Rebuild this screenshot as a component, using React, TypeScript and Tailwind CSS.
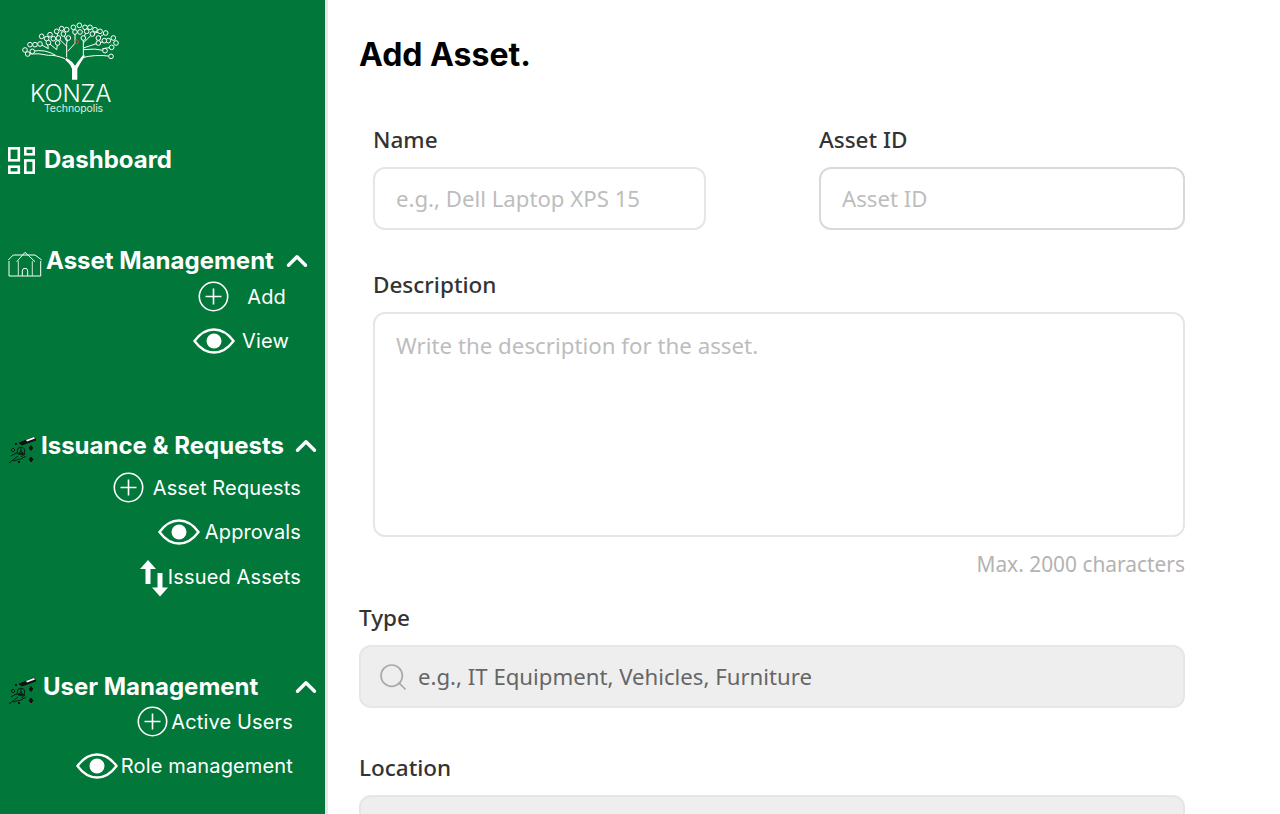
import type { ReactNode } from 'react';
import { Search, ChevronUp } from 'lucide-react';

const inter = "font-['Inter',sans-serif]";

const PlusCircle = () => (
  <svg width="31" height="31" viewBox="0 0 31 31" fill="none" stroke="#fff" className="shrink-0">
    <circle cx="15.5" cy="15.5" r="14.2" strokeWidth="1.6" />
    <path d="M15.5 7.5v16M7.5 15.5h16" strokeWidth="1.6" />
  </svg>
);

const Eye = () => (
  <svg width="42" height="26" viewBox="0 0 42 26" fill="none" className="shrink-0">
    <path d="M1.5 13C7 5.5 13.500 1.500 21 1.500S35 5.500 40.500 13C35 20.500 28.500 24.500 21 24.500S7 20.500 1.500 13Z" stroke="#fff" strokeWidth="2.4" />
    <circle cx="21" cy="13" r="7.500" fill="#fff" />
  </svg>
);

const Arrows = () => (
  <svg width="28" height="37" viewBox="0 0 28 37" fill="#fff" className="mt-[2px] shrink-0">
    <path d="M8 0l8 9h-5.500v15h-5V9H0Z" />
    <path d="M20 36.500l-8-9h5.500V13h5v14.500H28Z" />
  </svg>
);

const DashIcon = () => (
  <svg width="27" height="27" viewBox="0 0 27 27" fill="none" stroke="#fff" strokeWidth="2.6" className="shrink-0">
    <rect x="1.300" y="1.300" width="9.500" height="12" />
    <rect x="17.300" y="1.300" width="8.400" height="6" />
    <rect x="1.300" y="19.700" width="9.500" height="6" />
    <rect x="17.300" y="13.500" width="8.400" height="12.200" />
  </svg>
);

const HouseIcon = () => (
  <svg width="34" height="26" viewBox="0 0 34 26" fill="none" stroke="#fff" strokeWidth="1" className="mt-[5px] shrink-0">
    <path d="M0.300 9l5-5H27l6.700 5" />
    <path d="M1 10v15h31.700V10" />
    <path d="M8.700 10.700L17 1.300l10 9.400" />
    <path d="M10.300 25V10M24.300 25V10" stroke="#cfe6d8" />
    <path d="M14.300 25v-5a2.700 2.700 0 0 1 5.400 0v5" />
  </svg>
);

const HandIcon = () => (
  <svg width="28" height="28" viewBox="0 0 28 28" fill="none" stroke="#111" strokeWidth="0.9" className="mt-[5px] shrink-0">
    <path d="M11 7l15-6 2 3-14 5z" fill="#111" />
    <path d="M18 4l8-3 1 1.500-8 3z" fill="#fff" stroke="none" />
    <circle cx="13" cy="15" r="3.800" />
    <path d="M13 11.500v7M13 15l-2.500 2.500M13 15l2.500 2.500" />
    <path d="M23 9.500l1.800 2.500L23 14.500 21.200 12zM23 21l2 2.500L23 26l-2-2.500z" fill="#111" />
    <path d="M1 27l9-7M3 20l5-3 9 1-4 3M5 25l8-2 5-3" />
    <path d="M5 12l2 2-2 2-2-2zM8 7l1 1-1 1-1-1zM11 25l1 1-1 1-1-1z" />
  </svg>
);

const TreeLogo = () => {
  const dots = [
    [30, 96], [45, 80], [60, 80], [38, 108], [52, 100], [80, 55], [95, 62], [105, 50], [125, 40], [115, 62],
    [140, 32], [155, 35], [175, 28], [193, 22], [210, 28], [225, 28], [240, 35], [255, 40], [272, 45], [295, 60],
    [280, 68], [303, 75], [290, 88], [250, 60], [232, 48], [205, 60], [180, 42], [160, 60], [130, 60], [128, 75],
    [75, 78], [270, 98], [288, 115], [250, 75], [215, 40], [195, 42], [100, 74], [268, 68], [145, 48],
  ];
  return (
    <svg width="110" height="65" viewBox="0 0 330 195" fill="none" stroke="#fff" strokeWidth="3" className="shrink-0">
      <path d="M171 185V152Q165 136 150 125L155 120Q172 130 180 143Q190 128 205 110L210 114Q195 136 187 152V185Z" fill="#fff" stroke="none" />
      <path d="M150 122Q120 110 100 112Q75 105 38 108M122 112Q90 92 52 100M100 92L75 78M100 92L95 62M125 95L128 75M125 95L100 74" />
      <path d="M155 118V75L160 60M158 100L180 76M155 85L130 60M130 60L115 62M130 60L125 40M155 70L145 48" />
      <path d="M205 112V60M205 95Q240 90 270 98M198 120Q240 108 288 115M205 90L250 75M205 75L232 48M232 48L255 40M250 60L272 45M250 75L280 68M262 92L290 88M205 60L215 40M180 76V42" />
      {dots.map(([cx, cy]) => (
        <circle key={`${cx}-${cy}`} cx={cx} cy={cy} r="7" fill="#02773a" />
      ))}
      <circle cx="185" cy="71" r="5.500" stroke="#d8493c" strokeWidth="3" />
    </svg>
  );
};

const SubItem = ({ icon, label, className }: { icon: ReactNode; label: string; className: string }) => (
  <div className={`flex items-center justify-end text-[20px] leading-[24px] font-normal tracking-[0.15px] text-white ${className}`}>
    {icon}
    <span>{label}</span>
  </div>
);

const Field = ({ label, children, className = '' }: { label: string; children: ReactNode; className?: string }) => (
  <div className={className}>
    <div className="mb-[12px] h-[30px] text-[22.500px] leading-[30px] font-medium text-[#333]">{label}</div>
    {children}
  </div>
);

export default function App() {
  return (
    <div className="flex h-[814px] w-[1280px] overflow-hidden bg-white">
      <aside className={`w-[328px] shrink-0 border-r-[3px] border-[#e8e8e8] bg-[#02773a] text-white ${inter}`}>
        <div className="flex flex-col items-start pt-[18px] pl-[15px]">
          <TreeLogo />
          <div className="ml-[15px] text-[24px] leading-[22px] font-light tracking-[-0.2px]">KONZA</div>
          <div className="ml-[29px] text-[10.500px] leading-[8px] font-normal tracking-[-0.1px] text-[#dcebe2]">Technopolis</div>
        </div>

        <div className="mt-[32px] flex items-center gap-[9px] pl-[8px]">
          <DashIcon />
          <span className="text-[24px] leading-[30px] font-bold">Dashboard</span>
        </div>

        <div className="mt-[71px] flex h-[30px] items-start pl-[8px]">
          <HouseIcon />
          <span className="ml-[4px] flex-1 text-[24px] leading-[30px] font-bold">Asset Management</span>
          <ChevronUp size={34} strokeWidth={2.4} className="mr-[11px] -mt-[2px] shrink-0" />
        </div>
        <SubItem className="mt-[5px] h-[31px] pr-[39px]" icon={<span className="mr-[18px]"><PlusCircle /></span>} label="Add" />
        <SubItem className="mt-[13px] h-[31px] pr-[36px]" icon={<span className="mr-[7px] flex"><Eye /></span>} label="View" />

        <div className="mt-[75px] flex h-[30px] items-start pl-[8px]">
          <HandIcon />
          <span className="ml-[5px] flex-1 text-[24px] leading-[30px] font-bold">Issuance &amp; Requests</span>
          <ChevronUp size={34} strokeWidth={2.4} className="mr-[2px] -mt-[2px] shrink-0" />
        </div>
        <SubItem className="mt-[11px] h-[31px] pr-[24px]" icon={<span className="mr-[9px]"><PlusCircle /></span>} label="Asset Requests" />
        <SubItem className="mt-[13px] h-[31px] pr-[24px]" icon={<span className="mr-[5px] flex"><Eye /></span>} label="Approvals" />
        <SubItem className="mt-[14px] h-[32px] pr-[24px]" icon={<Arrows />} label="Issued Assets" />

        <div className="mt-[79px] flex h-[30px] items-start pl-[8px]">
          <HandIcon />
          <span className="ml-[7px] flex-1 text-[24px] leading-[30px] font-bold">User Management</span>
          <ChevronUp size={34} strokeWidth={2.4} className="mr-[2px] -mt-[2px] shrink-0" />
        </div>
        <SubItem className="mt-[4px] h-[31px] pr-[32px]" icon={<span className="mr-[3px]"><PlusCircle /></span>} label="Active Users" />
        <SubItem className="mt-[13px] h-[31px] pr-[32px]" icon={<span className="mr-[3px] flex"><Eye /></span>} label="Role management" />
      </aside>

      <main className="min-w-0 flex-1 pl-[31px] font-['Noto_Sans',sans-serif]">
        <h1 className={`mt-[35px] text-[32px] leading-[40px] font-bold text-black ${inter}`}>Add Asset.</h1>

        <div className="mt-[50px] ml-[14px] w-[812px]">
          <div className="flex gap-[113px]">
            <Field label="Name" className="w-[333px]">
              <div className="flex h-[63px] items-center rounded-[12px] border-2 border-[#e6e6e6] pl-[21px] text-[22.200px] text-[#bdbdbd]">e.g., Dell Laptop XPS 15</div>
            </Field>
            <Field label="Asset ID" className="w-[366px]">
              <div className="flex h-[63px] items-center rounded-[12px] border-2 border-[#d9d9d9] pl-[21px] text-[22.200px] text-[#bdbdbd]">Asset ID</div>
            </Field>
          </div>

          <Field label="Description" className="mt-[40px]">
            <div className="h-[225px] rounded-[12px] border-2 border-[#e6e6e6] pt-[14px] pl-[21px] text-[22.300px] leading-[36px] text-[#bdbdbd]">Write the description for the asset.</div>
          </Field>
          <div className="mt-[13px] text-right text-[20.900px] leading-[28px] text-[#b3b3b3]">Max. 2000 characters</div>
        </div>

        <div className="mt-[25px] w-[826px]">
          <Field label="Type">
            <div className="flex h-[63px] items-center rounded-[12px] border-2 border-[#e6e6e6] bg-[#eeeeee] pl-[16px] text-[22.200px] text-[#666]">
              <Search size={32} strokeWidth={1.3} className="mr-[9px] text-[#aaa]" />
              e.g., IT Equipment, Vehicles, Furniture
            </div>
          </Field>
          <Field label="Location" className="mt-[45px]">
            <div className="h-[63px] rounded-[12px] border-2 border-[#e6e6e6] bg-[#eeeeee]" />
          </Field>
        </div>
      </main>
    </div>
  );
}
